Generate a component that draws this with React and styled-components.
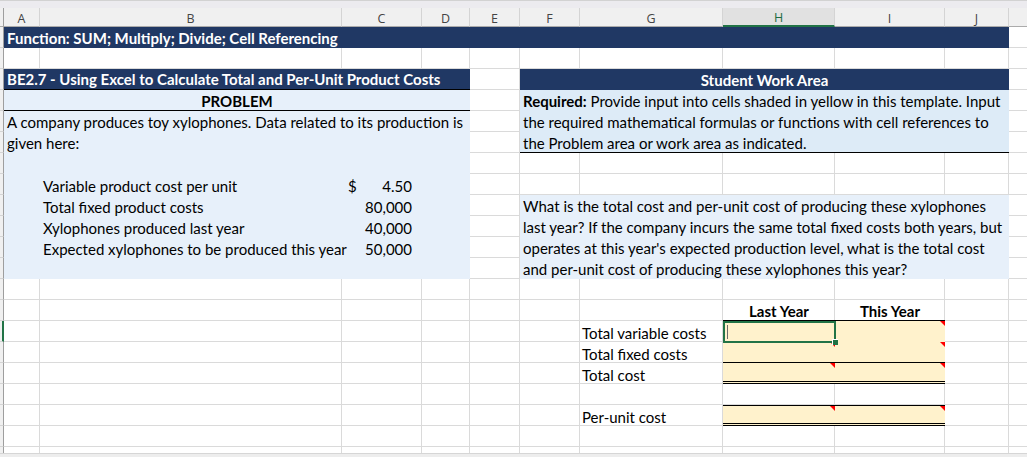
import React from "react";
import styled, { createGlobalStyle, css } from "styled-components";

const GlobalStyle = createGlobalStyle`
  html, body {
    margin: 0;
    padding: 0;
    background: #ffffff;
    overflow: hidden;
  }
`;

// column widths in px, first one is the sliver of the row header
const COL_WIDTHS = [4, 36, 302, 80, 48, 50, 60, 143, 112, 110, 64, 120];
const LETTERS = ["A", "B", "C", "D", "E", "F", "G", "H", "I", "J", "K"];
const COL = LETTERS.reduce((acc, l, i) => ({ ...acc, [l]: i + 2 }), {});
const ROW_COUNT = 21;

const NAVY = "#203864";
const LIGHT_BLUE = "#e7f0fa";
const REQ_BLUE = "#ddebf7";
const YELLOW = "#fff2cc";
const GREEN = "#217346";
const CELL_FONT = `"Lato", "Open Sans", sans-serif`;

const place = css`
  grid-row: ${(p) => p.$r + 1} / span ${(p) => p.$rs || 1};
  grid-column: ${(p) => COL[p.$c]} / span ${(p) => p.$cs || 1};
`;

const Sheet = styled.div`
  width: 1027px;
  height: 457px;
  display: flex;
  flex-direction: column;
  overflow: hidden;
  background: #fff;
`;

const TopStrip = styled.div`
  height: 8px;
  flex: none;
  box-sizing: border-box;
  border-top: 1px solid #d2d2d2;
  background: #ecebef;
`;

const Grid = styled.div`
  flex: 1;
  min-height: 0;
  overflow: hidden;
  display: grid;
  grid-template-columns: ${COL_WIDTHS.map((w) => `${w}px`).join(" ")};
  grid-template-rows: 19px repeat(${ROW_COUNT}, 21px);
  font-family: ${CELL_FONT};
  font-size: 15px;
  color: #000;
`;

const Corner = styled.div`
  grid-row: 1;
  grid-column: 1;
  background: #f0f0f0;
  box-sizing: border-box;
  border-right: 1px solid #9e9e9e;
  border-bottom: 1px solid #ababab;
`;

const ColHead = styled.div`
  grid-row: 1;
  grid-column: ${(p) => COL[p.$c]};
  box-sizing: border-box;
  display: flex;
  align-items: center;
  justify-content: center;
  padding-top: 2px;
  font-family: "Open Sans", "Noto Sans", sans-serif;
  font-size: 12.5px;
  background: ${(p) => (p.$active ? "#e1e1e1" : "#f0f0f0")};
  color: ${(p) => (p.$active ? "#1d6b41" : "#444")};
  border-right: 1px solid #d4d4d4;
  border-bottom: ${(p) => (p.$active ? `2px solid ${GREEN}` : "1px solid #ababab")};
`;

const RowHead = styled.div`
  grid-row: ${(p) => p.$r + 1};
  grid-column: 1;
  box-sizing: border-box;
  background: #f0f0f0;
  border-bottom: 1px solid #d4d4d4;
  border-right: ${(p) => (p.$active ? `2px solid ${GREEN}` : "1px solid #9e9e9e")};
`;

const GridCell = styled.div`
  ${place};
  box-sizing: border-box;
  border-right: 1px solid #dadada;
  border-bottom: 1px solid #dadada;
`;

const Band = styled.div`
  ${place};
  background: ${NAVY};
  color: #fff;
  font-weight: 700;
  display: flex;
  align-items: flex-end;
  justify-content: ${(p) => (p.$center ? "center" : "flex-start")};
  padding: 0 0 1px ${(p) => (p.$center ? "0" : "3px")};
  line-height: 18px;
  white-space: nowrap;
  box-sizing: border-box;
  border-bottom: ${(p) => (p.$line ? "1px solid #000" : "none")};
`;

const Shade = styled.div`
  ${place};
  background: ${(p) => p.$tone};
  box-sizing: border-box;
  border-bottom: ${(p) => (p.$line ? "1px solid #000" : "none")};
`;

const ProblemHead = styled.div`
  ${place};
  background: ${LIGHT_BLUE};
  border-bottom: 1px solid #000;
  box-sizing: border-box;
  font-weight: 700;
  display: flex;
  align-items: flex-end;
  justify-content: center;
  line-height: 18px;
`;

const TextBlock = styled.div`
  ${place};
  padding: 1px 0 0 3px;
  line-height: 21px;
  white-space: pre;
  overflow: visible;
`;

const Strong = styled.span`
  font-weight: 700;
`;

const CellText = styled.div`
  ${place};
  display: flex;
  align-items: flex-end;
  justify-content: ${(p) => p.$justify || "flex-start"};
  padding: 0 ${(p) => p.$pr || 0}px 0 ${(p) => p.$pl ?? 3}px;
  line-height: 18px;
  font-weight: ${(p) => (p.$bold ? 700 : 400)};
  white-space: nowrap;
  box-sizing: border-box;
`;

const ColumnTitle = styled(CellText)`
  justify-content: center;
  padding: 0;
  font-weight: 700;
  border-bottom: 1px solid #000;
`;

const borderFor = (kind) =>
  kind === "double" ? "3px double #000" : kind === "single" ? "1px solid #000" : "none";

const InputCell = styled.div`
  ${place};
  position: relative;
  background: ${YELLOW};
  box-sizing: border-box;
  border-top: ${(p) => borderFor(p.$top)};
  border-bottom: ${(p) => borderFor(p.$bottom)};

  &::after {
    content: "";
    display: ${(p) => (p.$flag ? "block" : "none")};
    position: absolute;
    top: 0;
    right: 0;
    width: 0;
    height: 0;
    border-style: solid;
    border-width: 0 5px 5px 0;
    border-color: transparent #ff0000 transparent transparent;
  }
`;

const Selection = styled.div`
  ${place};
  position: relative;
  box-sizing: border-box;
  border: 2px solid ${GREEN};
  margin: 0 -1px -1px 0;
`;

const Caret = styled.div`
  position: absolute;
  left: 2px;
  top: 2px;
  bottom: 2px;
  width: 1px;
  background: #6b6b6b;
`;

const FillHandle = styled.div`
  position: absolute;
  right: -4px;
  bottom: -4px;
  width: 5px;
  height: 5px;
  background: ${GREEN};
  border: 1px solid #fff;
  border-right: none;
  border-bottom: none;
`;

const TabStrip = styled.div`
  height: 4px;
  flex: none;
  box-sizing: border-box;
  border-top: 1px solid #d6d6d6;
  background: #ededed;
`;

const problemData = [
  { r: 8, label: "Variable product cost per unit", value: "4.50", dollar: true },
  { r: 9, label: "Total fixed product costs", value: "80,000" },
  { r: 10, label: "Xylophones produced last year", value: "40,000" },
  { r: 11, label: "Expected xylophones to be produced this year", value: "50,000" },
];

const workRows = [
  { r: 15, label: "Total variable costs", flags: [false, true] },
  { r: 16, label: "Total fixed costs", bottom: "single", flags: [true, true] },
  { r: 17, label: "Total cost", bottom: "double", flags: [true, true] },
  { r: 19, label: "Per-unit cost", top: "single", bottom: "double", flags: [true, true] },
];

export default function App() {
  const rows = Array.from({ length: ROW_COUNT }, (_, i) => i + 1);

  return (
    <Sheet>
      <GlobalStyle />
      <TopStrip />
      <Grid>
        <Corner />
        {LETTERS.map((l) => (
          <ColHead key={l} $c={l} $active={l === "H"}>
            {l === "K" ? "" : l}
          </ColHead>
        ))}

        {rows.map((r) => (
          <React.Fragment key={r}>
            <RowHead $r={r} $active={r === 15} />
            {LETTERS.map((l) => (
              <GridCell key={l} $r={r} $c={l} />
            ))}
          </React.Fragment>
        ))}

        <Band $r={1} $c="A" $cs={10}>
          Function: SUM; Multiply; Divide; Cell Referencing
        </Band>

        {/* problem side */}
        <Band $r={3} $c="A" $cs={4} $line>
          BE2.7 - Using Excel to Calculate Total and Per-Unit Product Costs
        </Band>
        <ProblemHead $r={4} $c="A" $cs={4}>
          PROBLEM
        </ProblemHead>
        <Shade $r={5} $c="A" $cs={4} $rs={8} $tone={LIGHT_BLUE} />
        <TextBlock $r={5} $c="A" $cs={4} $rs={2}>
          {"A company produces toy xylophones. Data related to its production is\ngiven here:"}
        </TextBlock>
        {problemData.map((d) => (
          <React.Fragment key={d.r}>
            <CellText $r={d.r} $c="B">
              {d.label}
            </CellText>
            {d.dollar && (
              <CellText $r={d.r} $c="C" $pl={6}>
                $
              </CellText>
            )}
            <CellText $r={d.r} $c="C" $justify="flex-end" $pr={10} $pl={0}>
              {d.value}
            </CellText>
          </React.Fragment>
        ))}

        {/* student work area */}
        <Band $r={3} $c="F" $cs={5} $center>
          Student Work Area
        </Band>
        <Shade $r={4} $c="F" $cs={5} $rs={3} $tone={REQ_BLUE} $line />
        <TextBlock $r={4} $c="F" $cs={5} $rs={3}>
          <Strong>Required:</Strong>
          {
            " Provide input into cells shaded in yellow in this template. Input\nthe required mathematical formulas or functions with cell references to\nthe Problem area or work area as indicated."
          }
        </TextBlock>

        <Shade $r={9} $c="F" $cs={5} $rs={4} $tone={LIGHT_BLUE} />
        <TextBlock $r={9} $c="F" $cs={5} $rs={4}>
          {
            "What is the total cost and per-unit cost of producing these xylophones\nlast year? If the company incurs the same total fixed costs both years, but\noperates at this year's expected production level, what is the total cost\nand per-unit cost of producing these xylophones this year?"
          }
        </TextBlock>

        <ColumnTitle $r={14} $c="H">
          Last Year
        </ColumnTitle>
        <ColumnTitle $r={14} $c="I">
          This Year
        </ColumnTitle>

        {workRows.map((w) => (
          <React.Fragment key={w.r}>
            <CellText $r={w.r} $c="G" $pl={2}>
              {w.label}
            </CellText>
            <InputCell $r={w.r} $c="H" $top={w.top} $bottom={w.bottom} $flag={w.flags[0]} />
            <InputCell $r={w.r} $c="I" $top={w.top} $bottom={w.bottom} $flag={w.flags[1]} />
          </React.Fragment>
        ))}

        <Selection $r={15} $c="H">
          <Caret />
          <FillHandle />
        </Selection>
      </Grid>
      <TabStrip />
    </Sheet>
  );
}
